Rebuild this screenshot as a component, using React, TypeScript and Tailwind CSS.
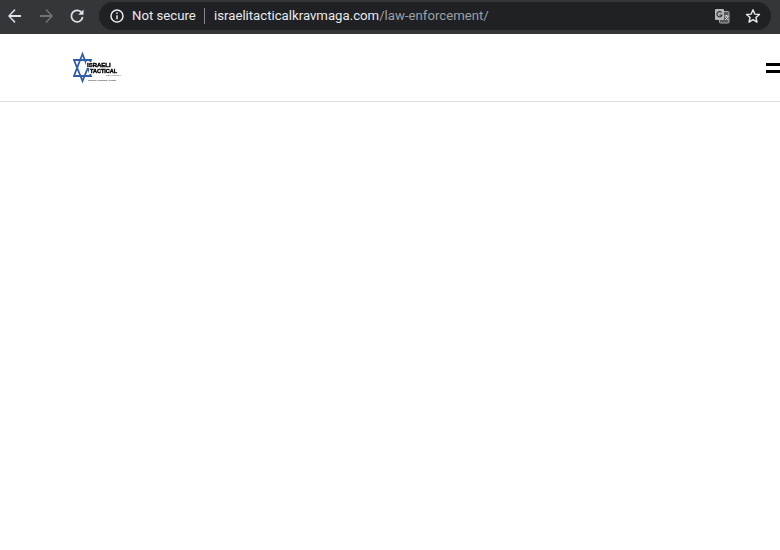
import React from 'react';

function Logo() {
  return (
    <div className="relative w-[46px] h-[32px] blur-[0.3px]">
      <svg width="24" height="32" viewBox="0 0 24 32" className="absolute left-0 top-0">
        <path d="M9.500 2 L18 24 L1 24 Z" fill="none" stroke="#2f5ea8" strokeWidth="1.800" />
        <path d="M9.500 29 L1 8 L18 8 Z" fill="none" stroke="#2f5ea8" strokeWidth="1.800" />
      </svg>
      <div className="absolute left-[13px] top-[10px] bg-white pl-[1px] text-[6px] leading-[6px] font-black text-black [-webkit-text-stroke:0.4px_black] [font-family:'Liberation_Sans',sans-serif]">
        ISRAELI
      </div>
      <div className="absolute left-[16px] top-[16px] bg-white pl-[1px] text-[5.5px] leading-[6px] font-black text-black whitespace-nowrap [-webkit-text-stroke:0.4px_black] [font-family:'Liberation_Sans',sans-serif]">
        TACTICAL
      </div>
      <div className="absolute left-[33px] top-[22px] text-[2.500px] leading-[3px] font-bold text-[#555] whitespace-nowrap [font-family:'Liberation_Sans',sans-serif]">
        KRAV MAGA
      </div>
      <div className="absolute left-[15px] top-[27px] text-[1.800px] leading-[3px] font-bold text-[#333] whitespace-nowrap [font-family:'Liberation_Sans',sans-serif]">
        PERSONAL DEFENSE ACADEMY
      </div>
    </div>
  );
}

export default function App() {
  return (
    <div className="w-[780px] h-[550px] overflow-hidden bg-white [font-family:'Roboto',sans-serif]">
      {/* Browser toolbar */}
      <div className="h-[34px] bg-[#35363a] flex items-start pt-[2px]">
        <div className="w-[99px] h-[28px] shrink-0 flex items-center pl-[7px] gap-[15px]">
          <svg width="16" height="16" viewBox="0 0 16 16" fill="#dee1e6">
            <path d="M14 7H3.800l4.700-4.700L7.500 1 1 8l6.500 7 1-1.300L3.800 9H14z" />
          </svg>
          <svg width="16" height="16" viewBox="0 0 16 16" fill="#727477">
            <path d="M2 7h10.200L7.500 2.300 8.500 1 15 8l-6.500 7-1-1.300L12.200 9H2z" />
          </svg>
          <svg width="16" height="16" viewBox="0 0 16 16" fill="none">
            <path d="M13 5.200A5.700 5.700 0 1 0 13.700 9" stroke="#dee1e6" strokeWidth="1.700" />
            <path d="M14.500 1.500v5.300H9.200z" fill="#dee1e6" />
          </svg>
        </div>
        <div className="w-[672px] h-[28px] rounded-full bg-[#202124] flex items-center pl-[10px] pr-[10px]">
          <svg width="16" height="16" viewBox="0 0 16 16" fill="none" className="mr-[7px] shrink-0">
            <circle cx="8" cy="8" r="6" stroke="#e8eaed" strokeWidth="1.500" />
            <path d="M8 7.200v4M8 4.600v1.400" stroke="#e8eaed" strokeWidth="1.500" />
          </svg>
          <span className="text-[13.2px] leading-[28px] text-[#e8eaed] whitespace-nowrap w-[72px]">Not secure</span>
          <div className="w-px h-[16px] bg-[#80868b] mr-[9px]" />
          <span className="text-[13.2px] leading-[28px] text-[#e8eaed] whitespace-nowrap">israelitacticalkravmaga.com</span>
          <span className="text-[13.2px] leading-[28px] text-[#9aa0a6] whitespace-nowrap">/law-enforcement/</span>
          <div className="flex-1" />
          <svg width="16" height="16" viewBox="0 0 16 16" className="mr-[15px] shrink-0">
            <rect x="5.500" y="3.500" width="9.500" height="11.500" rx="1" fill="#55575a" stroke="#a5a7aa" />
            <rect x="1" y="1" width="9" height="11" rx="1" fill="#b4b6b9" />
            <path d="M7.500 4.500A2.600 2.600 0 1 0 8 7H5.500" fill="none" stroke="#35363a" strokeWidth="1.200" />
            <path d="M10.500 8h4M12.500 7v1M14 8c-.5 2-2 3.500-3 4M11.500 9c.5 1.300 1.700 2.500 3 3" fill="none" stroke="#e8eaed" strokeWidth="0.900" />
          </svg>
          <svg width="16" height="16" viewBox="0 0 16 16" fill="none" className="shrink-0">
            <path d="M8 1.800l1.800 4.300 4.700.4-3.600 3 1.100 4.600L8 11.700l-4 2.400 1.100-4.600-3.600-3 4.700-.4z" stroke="#e8eaed" strokeWidth="1.400" strokeLinejoin="round" />
          </svg>
        </div>
      </div>

      {/* Site header */}
      <header className="h-[68px] bg-white border-b border-[#dedede] flex items-center justify-between pl-[73px]">
        <Logo />
        <div className="flex flex-col gap-[4px] w-[14px]">
          <div className="h-[3px] bg-black" />
          <div className="h-[3px] bg-black" />
        </div>
      </header>
    </div>
  );
}
